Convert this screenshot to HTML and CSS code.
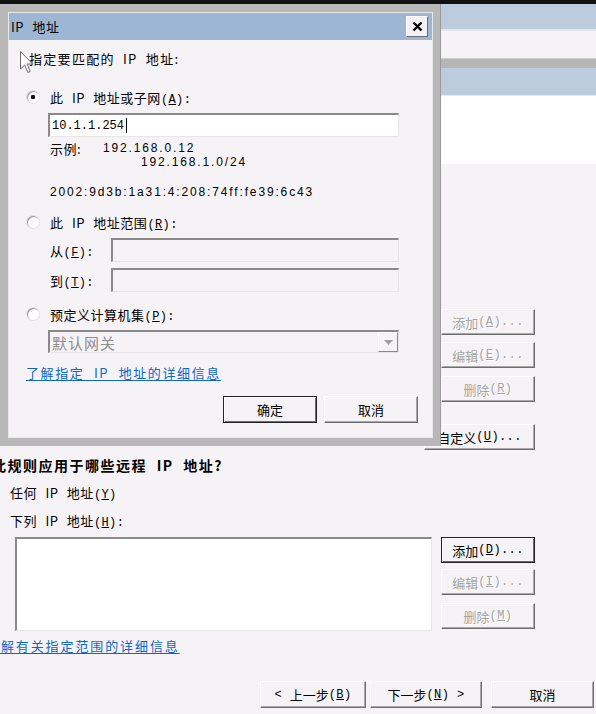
FILE: index.html
```html
<!DOCTYPE html>
<html lang="zh-CN">

<head>
  <meta charset="UTF-8" />
  <title>IP 地址</title>
  <link rel="stylesheet" href="styles.css">
</head>

<body>
  <div class="screen">
    <!-- wizard window behind the dialog -->
    <div class="wizard">
      <div class="wiz-band"></div>
      <div class="wiz-strip"></div>
      <div class="wiz-sep"></div>
      <div class="wiz-band wiz-band-low"></div>
      <div class="wiz-desc"></div>

      <div class="wiz-main">
        <div class="side-btns local-btns">
          <button class="btn btn-off">添加<span class="key">(<u>A</u>)...</span></button>
          <button class="btn btn-off">编辑<span class="key">(<u>E</u>)...</span></button>
          <button class="btn btn-off">删除<span class="key">(<u>R</u>)</span></button>
        </div>
        <button class="btn btn-custom">自定义<span class="key">(<u>U</u>)...</span></button>

        <div class="wiz-title">此规则应用于哪些远程 IP 地址?</div>
        <div class="radio-row wiz-radio"><span class="radio"></span><span>任何 IP 地址<span class="key">(<u>Y</u>)</span></span></div>
        <div class="radio-row wiz-radio wiz-radio-2"><span class="radio"></span><span>下列 IP 地址<span class="key">(<u>H</u>):</span></span></div>

        <div class="list-row">
          <div class="listbox"></div>
          <div class="side-btns">
            <button class="btn btn-default">添加<span class="key">(<u>D</u>)...</span></button>
            <button class="btn btn-off">编辑<span class="key">(<u>I</u>)...</span></button>
            <button class="btn btn-off">删除<span class="key">(<u>M</u>)</span></button>
          </div>
        </div>

        <a class="link wiz-link">了解有关指定范围的详细信息</a>

        <div class="nav-btns">
          <button class="btn btn-back"><span class="key">&lt; </span>上一步<span class="key">(<u>B</u>)</span></button>
          <button class="btn btn-next">下一步<span class="key">(<u>N</u>) &gt;</span></button>
          <button class="btn btn-cancel">取消</button>
        </div>
      </div>
    </div>

    <!-- IP address dialog -->
    <div class="dialog">
      <div class="dlg-inner">
        <div class="dlg-title">
          <span>IP 地址</span>
          <button class="close-btn">
            <svg width="11" height="11" viewBox="0 0 11 11">
              <path d="M1.5 1.5L9.5 9.5M9.5 1.5L1.5 9.5" stroke="#000" stroke-width="2.4" />
            </svg>
          </button>
        </div>

        <div class="dlg-body">
          <div class="dlg-lead">指定要匹配的 IP 地址:</div>

          <div class="radio-row dlg-radio"><span class="radio radio-on"></span><span>此 IP 地址或子网<span class="key">(<u>A</u>):</span></span></div>
          <div class="field field-main">
            <span class="field-text">10.1.1.254</span><span class="caret"></span>
          </div>
          <div class="example">
            <span class="example-label">示例:</span>
            <span class="mono">192.168.0.12</span>
          </div>
          <div class="example-2 mono">192.168.1.0/24</div>
          <div class="example-v6 mono">2002:9d3b:1a31:4:208:74ff:fe39:6c43</div>

          <div class="radio-row dlg-radio dlg-radio-2"><span class="radio"></span><span>此 IP 地址范围<span class="key">(<u>R</u>):</span></span></div>
          <div class="range-row range-from">
            <span class="range-label">从<span class="key">(<u>F</u>):</span></span>
            <div class="field field-off"></div>
          </div>
          <div class="range-row range-to">
            <span class="range-label">到<span class="key">(<u>T</u>):</span></span>
            <div class="field field-off"></div>
          </div>

          <div class="radio-row dlg-radio dlg-radio-3"><span class="radio"></span><span>预定义计算机集<span class="key">(<u>P</u>):</span></span></div>
          <div class="combo">
            <span class="combo-text">默认网关</span>
            <span class="combo-arrow">
              <svg width="9" height="5" viewBox="0 0 9 5">
                <path d="M0 0H9L4.5 5Z" fill="#a0a0a0" />
              </svg>
            </span>
          </div>

          <a class="link dlg-link">了解指定 IP 地址的详细信息</a>

          <div class="dlg-btns">
            <button class="btn btn-default btn-dlg">确定</button>
            <button class="btn btn-dlg">取消</button>
          </div>
        </div>
      </div>
    </div>

    <svg class="cursor" width="14" height="23" viewBox="0 0 14 23">
      <path d="M0.5 0.5V18L4.7 14L7.8 21.5L10.2 20.4L7.1 13H12.6Z" fill="#fff" stroke="#6a6a6a" stroke-width="1" />
    </svg>
  </div>
</body>

</html>
```

FILE: styles.css
```css
:root {
  --panel: #f6f3f6;
  --frame: #b8b8b8;
  --title: #9cb6d4;
  --band: #bdccdc;
  --text: #000;
  --text-off: #a4a4a4;
  --link: #1166cc;
  --shadow: #6e6e6e;
}

* {
  box-sizing: border-box;
  margin: 0;
  padding: 0;
}

body {
  width: 596px;
  height: 714px;
  overflow: hidden;
  background: var(--panel);
  color: var(--text);
  font-family: "Noto Sans CJK SC", "Liberation Sans", sans-serif;
  font-size: 13px;
  letter-spacing: 0.5px;
  word-spacing: 5px;
}

.screen {
  position: relative;
  width: 596px;
  height: 714px;
  overflow: hidden;
  border-top: 4px solid #111;
}

u {
  text-decoration: underline;
  text-underline-offset: 1px;
}

/* mnemonic "(A)" parts are drawn half-width, like the system font */
.key {
  font-family: "Liberation Mono", monospace;
  font-size: 12px;
  letter-spacing: 0.4px;
  word-spacing: 0;
}

/* ---------- wizard ---------- */

.wiz-band {
  height: 27px;
  background: var(--band);
  border-bottom: 2px solid #e4e6ec;
}

.wiz-band-low {
  height: 28px;
  border-bottom: 1px solid #e8e8ee;
}

.wiz-strip {
  height: 27px;
  background: var(--panel);
}

.wiz-sep {
  height: 10px;
  background: #b6b6b6;
  border-top: 1px solid #cfcfcf;
}

.wiz-desc {
  height: 68px;
  background: #fff;
}

.btn {
  display: flex;
  align-items: center;
  justify-content: center;
  height: 26px;
  font: inherit;
  color: var(--text);
  background: var(--panel);
  border: 1px solid;
  border-color: #fff var(--shadow) var(--shadow) #fff;
  box-shadow: inset -1px -1px 0 #a8a8a8;
  line-height: 1;
  white-space: pre;
}

.btn-off {
  color: var(--text-off);
  text-shadow: 1px 1px 0 #fff;
}

.btn-default {
  border: 1px solid #222;
  box-shadow: inset 1px 1px 0 #fff, inset -1px -1px 0 var(--shadow);
}

.side-btns {
  display: flex;
  flex-direction: column;
  width: 94px;
  gap: 7px;
}

.local-btns {
  margin: 145px 0 0 441px;
}

.local-btns .btn:last-child {
  margin-top: 1px;
}

.btn-custom {
  width: 111px;
  margin: 22px 0 0 424px;
}

.wiz-title {
  margin: 7px 0 0 -8px;
  height: 16px;
  line-height: 16px;
  font-size: 14px;
  font-weight: 700;
  letter-spacing: 1.5px;
}

.radio-row {
  display: flex;
  align-items: center;
  gap: 11px;
  height: 16px;
}

.radio {
  flex: none;
  width: 12px;
  height: 12px;
  border-radius: 50%;
  background: #fff;
  box-shadow: inset 1px 1px 0 #9a9a9a, 0 0 0 1px #e2e2e2;
}

.radio-on {
  background: radial-gradient(circle, #111 0 2px, #fff 2.5px);
}

.wiz-radio {
  margin: 11px 0 0 -13px;
}

.wiz-radio-2 {
  margin-top: 12px;
}

.list-row {
  display: flex;
  gap: 9px;
  margin: 9px 0 0 15px;
}

.listbox {
  width: 417px;
  height: 94px;
  background: #fff;
  border: 1px solid;
  border-width: 2px 1px 1px 2px;
  border-color: #8a8a8a #e6e6e6 #e6e6e6 #8a8a8a;
}

.list-row .side-btns {
  gap: 6px;
}

.list-row .btn:last-child {
  margin-top: 2px;
}

.link {
  display: block;
  color: var(--link);
  text-decoration: underline;
  text-underline-offset: 2px;
  height: 16px;
  line-height: 16px;
  letter-spacing: 1.9px;
}

.wiz-link {
  margin: 7px 0 0 -14px;
  width: max-content;
}

.nav-btns {
  display: flex;
  margin: 27px 0 0 260px;
}

.nav-btns .btn {
  height: 27px;
}

.btn-back {
  width: 106px;
}

.btn-next {
  width: 112px;
  margin-left: 4px;
}

.btn-cancel {
  width: 103px;
  margin-left: 9px;
}

/* ---------- dialog ---------- */

.dialog {
  position: absolute;
  left: 0;
  top: 0;
  width: 441px;
  height: 442px;
  background: var(--frame);
  padding: 8px 7px 8px 8px;
  border-right: 1px solid #9a9a9a;
}

.dlg-inner {
  height: 100%;
  border: 1px solid #e9e9e9;
  background: var(--panel);
}

.dlg-title {
  display: flex;
  align-items: center;
  justify-content: space-between;
  height: 27px;
  padding: 0 4px 0 2px;
  background: var(--title);
}

.close-btn {
  display: flex;
  align-items: center;
  justify-content: center;
  width: 22px;
  height: 21px;
  background: #f4f1f4;
  border: 1px solid;
  border-color: #fff var(--shadow) var(--shadow) #fff;
}

.dlg-body {
  display: flex;
  flex-direction: column;
  align-items: flex-start;
}

.dlg-lead {
  margin: 11px 0 0 20px;
  height: 16px;
  line-height: 16px;
  word-spacing: 4px;
  letter-spacing: 1.3px;
}

.dlg-radio {
  margin: 22px 0 0 18px;
}

.dlg-radio-2 {
  margin-top: 15px;
}

.dlg-radio-3 {
  margin-top: 14px;
}

.field {
  display: flex;
  align-items: center;
  height: 24px;
  background: #fff;
  border: 1px solid;
  border-width: 2px 1px 1px 2px;
  border-color: #8a8a8a #e6e6e6 #e6e6e6 #8a8a8a;
}

.field-main {
  width: 351px;
  margin: 8px 0 0 39px;
  padding-left: 2px;
}

.field-text {
  font-family: "Liberation Mono", monospace;
  font-size: 12px;
  letter-spacing: 0;
}

.caret {
  width: 1px;
  height: 15px;
  margin-left: 2px;
  background: #000;
}

.field-off {
  width: 288px;
  background: var(--panel);
}

.mono {
  font-family: "Liberation Sans", sans-serif;
  font-size: 12px;
  letter-spacing: 1.85px;
}

.example {
  display: flex;
  align-items: center;
  height: 14px;
  margin: 4px 0 0 41px;
}

.example-label {
  width: 53px;
}

.example-2 {
  height: 14px;
  line-height: 14px;
  margin-left: 132px;
}

.example-v6 {
  height: 14px;
  line-height: 14px;
  margin: 16px 0 0 41px;
}

.range-row {
  display: flex;
  align-items: center;
  margin: 8px 0 0 41px;
}

.range-to {
  margin-top: 6px;
}

.range-label {
  width: 61px;
}

.combo {
  display: flex;
  align-items: center;
  justify-content: space-between;
  width: 351px;
  height: 23px;
  margin: 8px 0 0 39px;
  padding-left: 2px;
  border: 1px solid;
  border-width: 2px 1px 1px 2px;
  border-color: #8a8a8a #e6e6e6 #e6e6e6 #8a8a8a;
}

.combo-text {
  color: #8e8e8e;
  font-size: 15px;
  letter-spacing: 1px;
}

.combo-arrow {
  display: flex;
  align-items: center;
  justify-content: center;
  width: 20px;
  height: 20px;
  border: 1px solid;
  border-color: #fff #8a8a8a #8a8a8a #fff;
}

.dlg-link {
  margin: 12px 0 0 17px;
  letter-spacing: 1.6px;
}

.dlg-btns {
  display: flex;
  gap: 7px;
  margin: 15px 0 0 214px;
}

.btn-dlg {
  width: 94px;
  height: 27px;
}

.cursor {
  position: absolute;
  left: 20px;
  top: 47px;
}
```
